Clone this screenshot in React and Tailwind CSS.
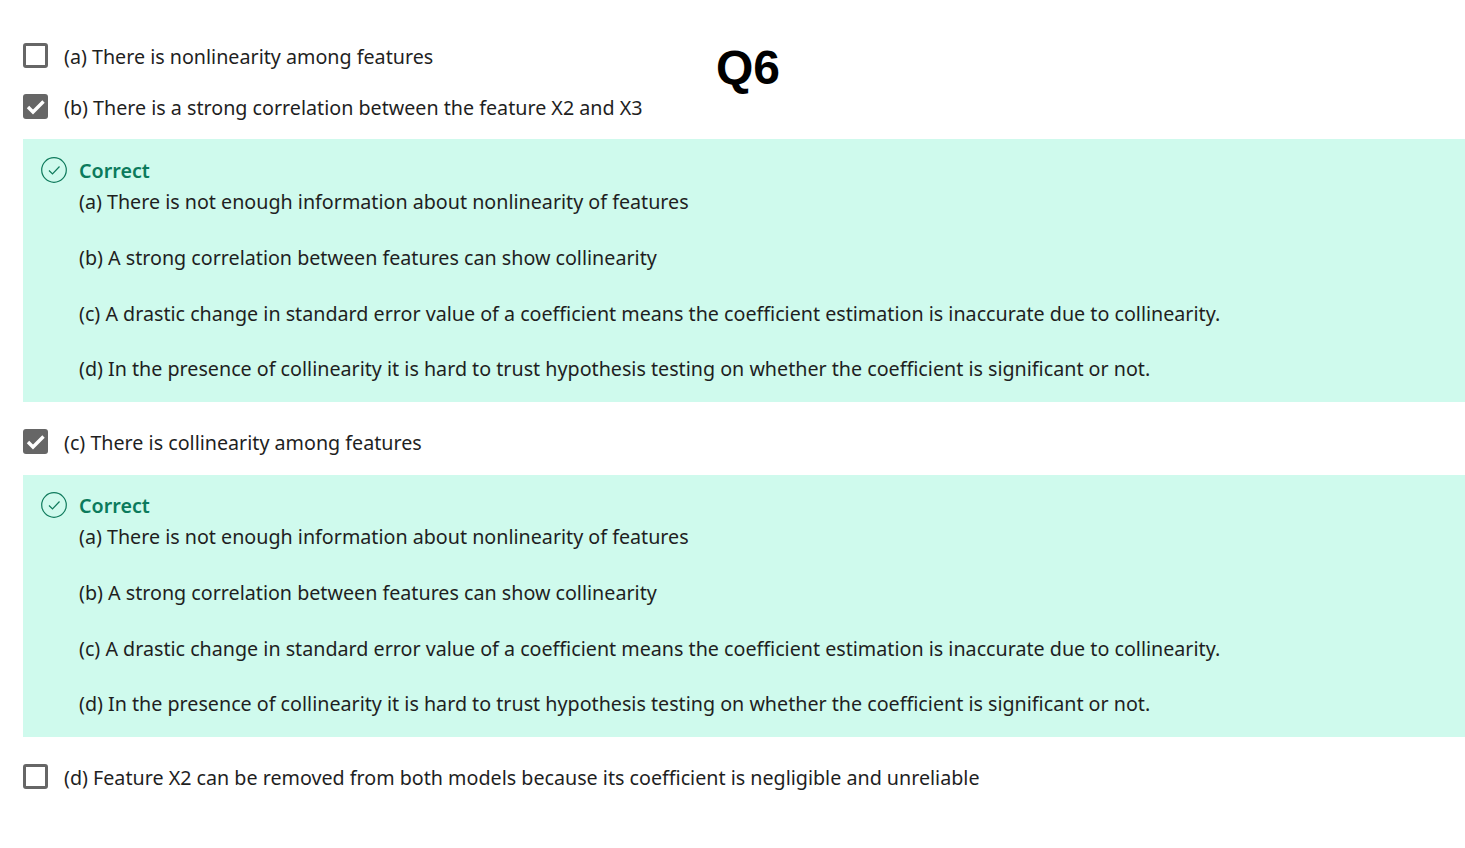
const explanations = [
  "(a) There is not enough information about nonlinearity of features",
  "(b) A strong correlation between features can show collinearity",
  "(c) A drastic change in standard error value of a coefficient means the coefficient estimation is inaccurate due to collinearity.",
  "(d) In the presence of collinearity it is hard to trust hypothesis testing on whether the coefficient is significant or not.",
];

const Checkbox = ({ checked }) =>
  checked ? (
    <span className="h-[25px] w-[25px] shrink-0 rounded-[3px] bg-[#666666]">
      <svg width="25" height="25" viewBox="0 0 25 25" fill="none">
        <path d="M5 13l5 5L20.5 7.5" stroke="#fff" strokeWidth="3.4" />
      </svg>
    </span>
  ) : (
    <span className="h-[25px] w-[25px] shrink-0 rounded-[3px] border-[3px] border-[#666666] bg-white" />
  );

const Option = ({ checked, children, className }) => (
  <div className={`flex h-[25px] items-center gap-4 ${className}`}>
    <Checkbox checked={checked} />
    <span className="mt-[3px] text-[#1f1f1f]">{children}</span>
  </div>
);

const Feedback = ({ className }) => (
  <div className={`flex gap-3 bg-[#cffaed] pb-[18.6px] pl-[18px] ${className}`}>
    <svg className="shrink-0" width="26" height="26" viewBox="0 0 26 26" fill="none">
      <circle cx="13" cy="13" r="12.3" stroke="#0f7a5c" strokeWidth="1.2" />
      <path d="M8 13.5l3.5 3.5 7-7.5" stroke="#0f7a5c" strokeWidth="1.2" />
    </svg>
    <div>
      <div className="h-[31px] font-semibold leading-[28px] text-[#0b7a5c]">Correct</div>
      {explanations.map((line) => (
        <p key={line} className="mb-[27.8px] leading-[28px] text-[#1f1f1f] last:mb-0">
          {line}
        </p>
      ))}
    </div>
  </div>
);

export default function App() {
  return (
    <div className="min-h-[848px] bg-white pl-[23px] pt-[43px] font-['Noto_Sans',sans-serif] text-[19.7px]">
      <div className="flex items-start">
        <div className="w-[693px]">
          <Option>(a) There is nonlinearity among features</Option>
          <Option checked className="mt-[26px]">
            (b) There is a strong correlation between the feature X2 and X3
          </Option>
        </div>
        <h1 className="font-['Liberation_Sans',sans-serif] text-[48px] font-bold leading-[50px] text-black">
          Q6
        </h1>
      </div>
      <Feedback className="mt-[20px] pt-[18px]" />
      <Option checked className="mt-[27px]">
        (c) There is collinearity among features
      </Option>
      <Feedback className="mt-[21px] pt-[17px]" />
      <Option className="mt-[27px]">
        (d) Feature X2 can be removed from both models because its coefficient is negligible and unreliable
      </Option>
    </div>
  );
}
